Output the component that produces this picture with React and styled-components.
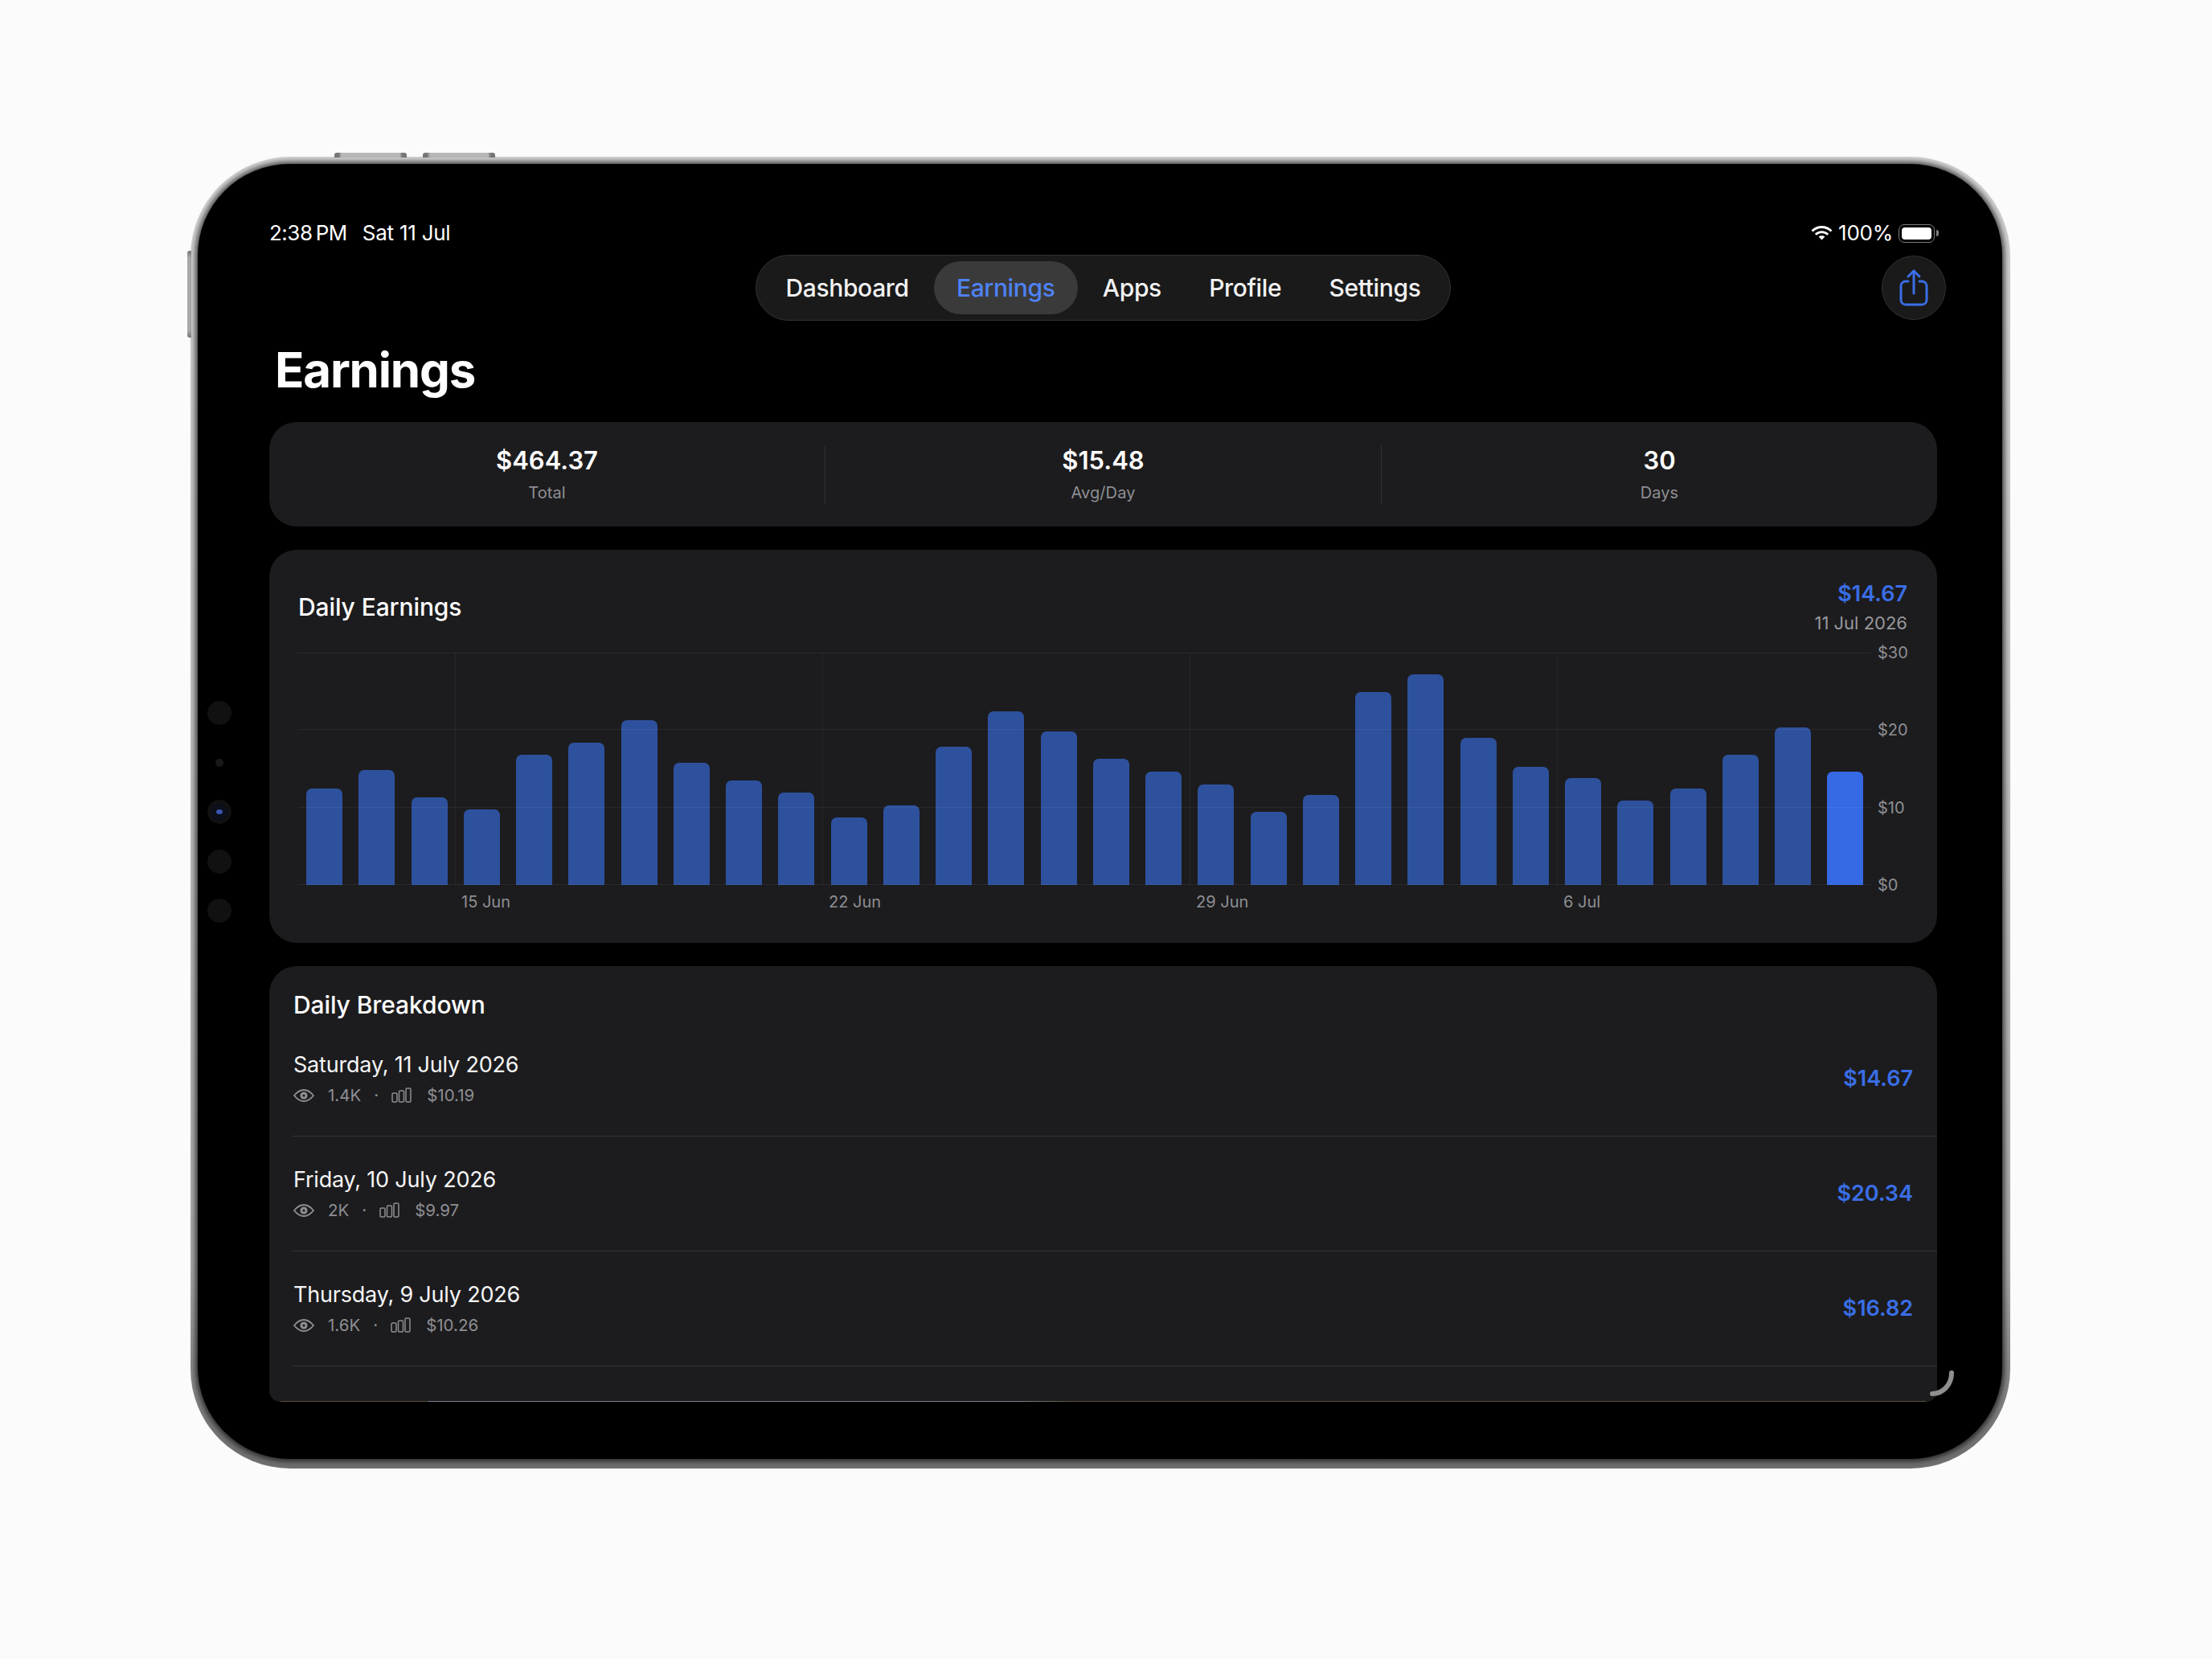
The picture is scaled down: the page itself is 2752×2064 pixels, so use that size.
import { Fragment } from "react";
import styled, { createGlobalStyle } from "styled-components";

const GlobalStyle = createGlobalStyle`
    html, body {
        margin: 0;
        width: 2752px;
        height: 2064px;
        overflow: hidden;
        background: #fbfbfb;
    }
    * {
        box-sizing: border-box;
    }
    body {
        font-family: Inter, "Liberation Sans", sans-serif;
        color: #fff;
    }
`

const Stage = styled.div`
    width: 2752px;
    height: 2064px;
    padding: 195px 0 0 237px;
`

const Device = styled.div`
    position: relative;
    width: 2264px;
    height: 1632px;
    padding: 9px 10px 12px 9px;
    border-radius: 124px;
    background: linear-gradient(180deg, #d2d2d2 0%, #c0c0c0 45%, #a8a8a8 85%, #767676 97%, #6e6e6e 100%);
`

const HardwareButton = styled.span`
    position: absolute;
    top: -5px;
    left: ${(p) => p.$left}px;
    width: 90px;
    height: 6px;
    border-radius: 3px 3px 0 0;
    background: linear-gradient(90deg, #777 0 6%, #b9b9b9 10% 90%, #777 94%);
`

const SideButton = styled.span`
    position: absolute;
    top: 117px;
    left: -4px;
    width: 5px;
    height: 108px;
    border-radius: 3px 0 0 3px;
    background: linear-gradient(180deg, #777, #a9a9a9 8% 92%, #777);
`

const Screen = styled.div`
    position: relative;
    height: 100%;
    padding: 71px 81px 0 89px;
    border-radius: 114px;
    background: #000;
    box-shadow: 0 0 6px 3px rgba(0, 0, 0, 0.65);
`

const SensorRail = styled.div`
    position: absolute;
    left: 12px;
    top: 668px;
    display: flex;
    flex-direction: column;
    gap: 31.6px;
`

const Sensor = styled.span`
    display: flex;
    align-items: center;
    justify-content: center;
    width: 30px;
    height: 30px;
    border-radius: 50%;
    background: ${(p) => (p.$small ? "transparent" : "#111")};

    &::after {
        content: "";
        width: ${(p) => (p.$small ? 10 : 8)}px;
        height: ${(p) => (p.$small ? 10 : 6)}px;
        border-radius: 50%;
        background: ${(p) => (p.$small ? "#181818" : p.$lens ? "#3c55b4" : "transparent")};
        box-shadow: ${(p) => (p.$lens ? "0 0 0 7px #0b0f18" : "none")};
    }
`

const ScrollArc = styled.svg`
    position: absolute;
    right: 60px;
    bottom: 78px;
`

const StatusBar = styled.div`
    display: flex;
    align-items: center;
    justify-content: space-between;
    height: 30px;
    font-size: 26px;
    line-height: 30px;
    letter-spacing: -0.25px;
`

const StatusLeft = styled.div`
    display: flex;
    gap: 19px;
`

const StatusTime = styled.span`
    letter-spacing: -0.5px;
`

const StatusRight = styled.div`
    display: flex;
    align-items: center;
    gap: 7px;
    padding-right: 3px;
`

const Battery = styled.span`
    position: relative;
    display: block;
    width: 45px;
    height: 23px;
    padding: 3px;
    border: 1.5px solid #7d7d7d;
    border-radius: 7px;

    &::before {
        content: "";
        display: block;
        height: 100%;
        border-radius: 4px;
        background: #fff;
    }

    &::after {
        content: "";
        position: absolute;
        top: 6px;
        right: -5.5px;
        width: 3px;
        height: 8px;
        border-radius: 0 3px 3px 0;
        background: #7d7d7d;
    }
`

const NavRow = styled.div`
    display: grid;
    grid-template-columns: 1fr auto 1fr;
    align-items: center;
    margin-top: 12px;
    height: 82px;
`

const TabBar = styled.nav`
    grid-column: 2;
    display: flex;
    gap: 3px;
    height: 82px;
    padding: 7px 8px;
    border: 1.5px solid #323232;
    border-radius: 41px;
    background: #1a1a1a;
`

const Tab = styled.span`
    display: flex;
    align-items: center;
    padding: 0 28.2px;
    border-radius: 34px;
    font-size: 30px;
    font-weight: 500;
    letter-spacing: -0.38px;
    color: ${(p) => (p.$active ? "#4f82f5" : "#f2f2f2")};
    background: ${(p) => (p.$active ? "#3a3a3a" : "transparent")};
`

const ShareButton = styled.button`
    justify-self: end;
    display: flex;
    align-items: center;
    justify-content: center;
    width: 80px;
    height: 80px;
    margin-right: -11px;
    padding: 0;
    border: 1.5px solid #313131;
    border-radius: 50%;
    background: #1a1a1a;
`

const PageTitle = styled.h1`
    margin: 25px 0 29px;
    padding-left: 7px;
    font-size: 60px;
    line-height: 72px;
    font-weight: 700;
    letter-spacing: -1.2px;
`

const Card = styled.section`
    border-radius: 34px;
    background: #1c1c1e;
`

const SummaryCard = styled(Card)`
    display: flex;
    align-items: center;
    height: 130px;
    margin-bottom: 29px;
`

const Stat = styled.div`
    flex: 1;
    text-align: center;
`

const StatValue = styled.div`
    font-size: 31px;
    line-height: 38px;
    font-weight: 600;
`

const StatLabel = styled.div`
    margin-top: 7px;
    font-size: 20px;
    line-height: 28px;
    letter-spacing: 0.1px;
    color: #8e8e93;
`

const StatDivider = styled.span`
    width: 1px;
    height: 73px;
    background: #303032;
`

const ChartCard = styled(Card)`
    height: 489px;
    padding: 36px 37px 0 36px;
    margin-bottom: 29px;
`

const ChartHeader = styled.div`
    display: flex;
    align-items: center;
    justify-content: space-between;
    margin-bottom: 22px;
`

const SectionTitle = styled.h2`
    margin: 0;
    font-size: 30px;
    font-weight: 500;
    line-height: 36px;
    letter-spacing: -0.1px;
`

const SelectedDay = styled.div`
    text-align: right;
`

const SelectedAmount = styled.div`
    margin-top: 2px;
    font-size: 27px;
    line-height: 34px;
    font-weight: 600;
    color: #3a6ee6;
`

const SelectedDate = styled.div`
    margin-top: 4px;
    font-size: 22px;
    line-height: 30px;
    color: #98989d;
`

const ChartBody = styled.div`
    display: flex;
`

const Plot = styled.div`
    position: relative;
    flex: 1;
    display: flex;
    align-items: flex-end;
    justify-content: space-between;
    height: 289px;
    padding: 0 9.5px 0 10px;
`

const Bar = styled.div`
    width: 45px;
    height: ${(p) => p.$height}px;
    border-radius: 7px 7px 0 0;
    background: ${(p) => (p.$selected ? "#3669e4" : "#2e519e")};
`

const GridLines = styled.svg`
    position: absolute;
    inset: 0;
    width: 100%;
    height: 100%;
`

const YAxis = styled.div`
    display: flex;
    flex-direction: column;
    justify-content: space-between;
    width: 45px;
    height: 289px;
    padding-left: 8px;
`

const AxisLabel = styled.span`
    font-size: 20px;
    color: #8e8e93;
`

const YLabel = styled(AxisLabel)`
    display: flex;
    align-items: center;
    height: 0;
`

const XAxis = styled.div`
    display: flex;
    margin-top: 6px;
    padding-left: 203px;
    line-height: 30px;
`

const XLabel = styled(AxisLabel)`
    flex: 0 0 457px;
`

const BreakdownCard = styled(Card)`
    position: relative;
    height: 542px;
    padding-top: 30px;
    border-radius: 34px 34px 14px 14px;
    overflow: hidden;

    &::after {
        content: "";
        position: absolute;
        left: 14px;
        right: 14px;
        bottom: 0;
        height: 1.5px;
        background: linear-gradient(90deg, #5c523a 0 9%, #7b858b 9% 45%, #5c523a 48%);
    }
`

const BreakdownTitle = styled(SectionTitle)`
    padding-left: 30px;
    margin-bottom: 2.5px;
`

const DayRow = styled.div`
    display: flex;
    align-items: center;
    justify-content: space-between;
    height: 143px;
    margin-left: 29px;
    padding: 0 30px 0 1px;
    border-bottom: 1.5px solid #353537;
`

const DayDate = styled.div`
    font-size: 27px;
    line-height: 34px;
    letter-spacing: -0.2px;
    color: #f5f5f5;
`

const DayMeta = styled.div`
    display: flex;
    align-items: center;
    margin-top: 8px;
    font-size: 20.5px;
    line-height: 26px;
    color: #8e8e93;
`

const MetaDot = styled.span`
    margin: 0 16px;
`

const MetaText = styled.span`
    margin-left: ${(p) => p.$gap}px;
`

const DayAmount = styled.div`
    font-size: 27px;
    font-weight: 600;
    color: #3a6ee6;
`

const dailyEarnings = [
    12.51, 14.85, 11.27, 9.71, 16.82, 18.33, 21.24, 15.73, 13.45, 11.94,
    8.77, 10.23, 17.81, 22.43, 19.78, 16.3, 14.64, 12.93, 9.45, 11.63,
    24.87, 27.21, 18.95, 15.26, 13.76, 10.9, 12.51, 16.82, 20.34, 14.67,
]

const days = [
    { date: "Saturday, 11 July 2026", views: "1.4K", rpm: "$10.19", amount: "$14.67" },
    { date: "Friday, 10 July 2026", views: "2K", rpm: "$9.97", amount: "$20.34" },
    { date: "Thursday, 9 July 2026", views: "1.6K", rpm: "$10.26", amount: "$16.82" },
]

const tabs = ["Dashboard", "Earnings", "Apps", "Profile", "Settings"]

const stats = [
    { value: "$464.37", label: "Total" },
    { value: "$15.48", label: "Avg/Day" },
    { value: "30", label: "Days" },
]

const PLOT_HEIGHT = 289

const WifiIcon = () => (
    <svg width="27" height="18" viewBox="0 0 27 18" fill="none" stroke="#fff" strokeWidth="2.8">
        <path d="M1.5 6.5C8.5 -0.2 18.5 -0.2 25.5 6.5" />
        <path d="M5.8 10.8C10.2 6.6 16.8 6.6 21.2 10.8" />
        <path d="M13.5 17.5L9.6 13.6C11.8 11.8 15.2 11.8 17.4 13.6Z" fill="#fff" stroke="none" />
    </svg>
)

const ShareIcon = () => (
    <svg width="36" height="48" viewBox="0 0 36 48" fill="none" stroke="#3a6ee6" strokeWidth="3" strokeLinecap="round" strokeLinejoin="round">
        <path d="M11 16H8C4.5 16 2 18.5 2 22V39C2 42.5 4.5 45 8 45H28C31.5 45 34 42.5 34 39V22C34 18.5 31.5 16 28 16H25" />
        <path d="M18 31V3" />
        <path d="M11 10L18 3L25 10" />
    </svg>
)

const EyeIcon = () => (
    <svg width="26" height="16" viewBox="0 0 26 16" fill="none">
        <path d="M1 8C5 3 9 1 13 1C17 1 21 3 25 8C21 13 17 15 13 15C9 15 5 13 1 8Z" stroke="#8e8e93" strokeWidth="1.8" />
        <circle cx="13" cy="8" r="4.6" fill="#8e8e93" />
        <circle cx="13" cy="8" r="1.6" fill="#1c1c1e" />
    </svg>
)

const BarsIcon = () => (
    <svg width="25" height="19" viewBox="0 0 25 19" fill="none" stroke="#8e8e93" strokeWidth="1.5">
        <rect x="1" y="7" width="6" height="11" rx="1.5" />
        <rect x="9.5" y="4" width="6" height="14" rx="1.5" />
        <rect x="18" y="1" width="6" height="17" rx="1.5" />
    </svg>
)

const Grid = () => (
    <GridLines viewBox="0 0 1957 289" preserveAspectRatio="none">
        {[0.5, 95.5, 192.5, 288.5].map((y) => (
            <line key={y} x1="0" x2="1957" y1={y} y2={y} stroke="#fff" strokeOpacity="0.06" />
        ))}
        {[195.5, 652.5, 1109.5, 1566.5].map((x) => (
            <line key={x} x1={x} x2={x} y1="0" y2="289" stroke="#fff" strokeOpacity="0.05" />
        ))}
    </GridLines>
)

const App = () => {
    return (
        <Stage>
            <GlobalStyle />
            <Device>
                <HardwareButton $left={179} />
                <HardwareButton $left={289} />
                <SideButton />
                <Screen>
                    <SensorRail>
                        <Sensor />
                        <Sensor $small />
                        <Sensor $lens />
                        <Sensor />
                        <Sensor />
                    </SensorRail>

                    <StatusBar>
                        <StatusLeft>
                            <StatusTime>2:38&#8201;PM</StatusTime>
                            <span>Sat 11 Jul</span>
                        </StatusLeft>
                        <StatusRight>
                            <WifiIcon />
                            <span>100%</span>
                            <Battery />
                        </StatusRight>
                    </StatusBar>

                    <NavRow>
                        <TabBar>
                            {tabs.map((tab) => (
                                <Tab key={tab} $active={tab === "Earnings"}>{tab}</Tab>
                            ))}
                        </TabBar>
                        <ShareButton>
                            <ShareIcon />
                        </ShareButton>
                    </NavRow>

                    <PageTitle>Earnings</PageTitle>

                    <SummaryCard>
                        {stats.map((stat, i) => (
                            <Fragment key={stat.label}>
                                {i > 0 && <StatDivider />}
                                <Stat>
                                    <StatValue>{stat.value}</StatValue>
                                    <StatLabel>{stat.label}</StatLabel>
                                </Stat>
                            </Fragment>
                        ))}
                    </SummaryCard>

                    <ChartCard>
                        <ChartHeader>
                            <SectionTitle>Daily Earnings</SectionTitle>
                            <SelectedDay>
                                <SelectedAmount>$14.67</SelectedAmount>
                                <SelectedDate>11 Jul 2026</SelectedDate>
                            </SelectedDay>
                        </ChartHeader>
                        <ChartBody>
                            <Plot>
                                {dailyEarnings.map((value, i) => (
                                    <Bar key={i} $height={(value / 30) * PLOT_HEIGHT} $selected={i === dailyEarnings.length - 1} />
                                ))}
                                <Grid />
                            </Plot>
                            <YAxis>
                                <YLabel>$30</YLabel>
                                <YLabel>$20</YLabel>
                                <YLabel>$10</YLabel>
                                <YLabel>$0</YLabel>
                            </YAxis>
                        </ChartBody>
                        <XAxis>
                            <XLabel>15 Jun</XLabel>
                            <XLabel>22 Jun</XLabel>
                            <XLabel>29 Jun</XLabel>
                            <XLabel>6 Jul</XLabel>
                        </XAxis>
                    </ChartCard>

                    <BreakdownCard>
                        <BreakdownTitle>Daily Breakdown</BreakdownTitle>
                        {days.map((day) => (
                            <DayRow key={day.date}>
                                <div>
                                    <DayDate>{day.date}</DayDate>
                                    <DayMeta>
                                        <EyeIcon />
                                        <MetaText $gap={17}>{day.views}</MetaText>
                                        <MetaDot>·</MetaDot>
                                        <BarsIcon />
                                        <MetaText $gap={19}>{day.rpm}</MetaText>
                                    </DayMeta>
                                </div>
                                <DayAmount>{day.amount}</DayAmount>
                            </DayRow>
                        ))}
                    </BreakdownCard>

                    <ScrollArc width="32" height="32" viewBox="0 0 32 32" fill="none">
                        <path d="M5 29C18 29 29 18 29 3" stroke="#8f8f8f" strokeWidth="6" strokeLinecap="round" />
                    </ScrollArc>
                </Screen>
            </Device>
        </Stage>
    )
}

export default App;
